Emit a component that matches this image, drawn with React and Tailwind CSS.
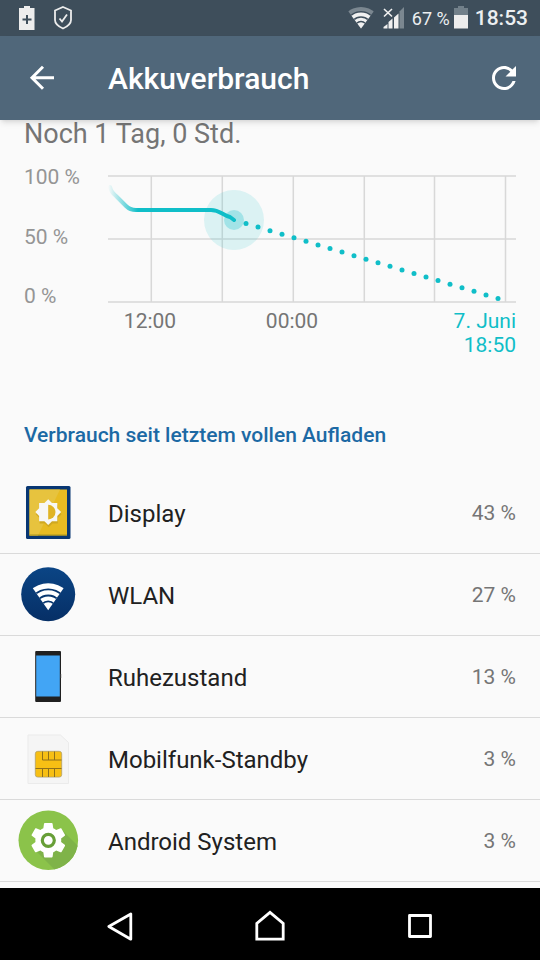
const usage = [
  { name: 'Display', percent: 43, Icon: DisplayIcon },
  { name: 'WLAN', percent: 27, Icon: WlanIcon },
  { name: 'Ruhezustand', percent: 13, Icon: PhoneIcon },
  { name: 'Mobilfunk-Standby', percent: 3, Icon: SimIcon },
  { name: 'Android System', percent: 3, Icon: GearIcon },
];

const projection = Array.from({ length: 22 }, (_, i) => ({
  x: 138 + i * 12,
  y: 48.5 + i * 3.57,
}));

function DisplayIcon() {
  return (
    <svg viewBox="0 1 60 60" className="size-[60px]" aria-hidden="true">
      <rect x="8" y="4" width="44.5" height="53" rx="1.5" fill="#083672" />
      <rect x="11.5" y="7.5" width="37.5" height="46" fill="#e7bb22" />
      <path d="M11.5 7.5H42L20 53.5h-8.5z" fill="#e7c33e" />
      <path d="M11.5 53h37.5" stroke="#a8941f" />
      <path d="M30.2 18.4l3.8 3.8h5.3v5.3l3.8 3.8-3.8 3.8v5.3H34l-3.8 3.8-3.8-3.8h-5.3v-5.3l-3.8-3.8 3.8-3.8v-5.3h5.3z" transform="translate(0.5 1)" fill="#d0a820" />
      <path d="M30.2 17.2l3.8 3.8h5.3v5.3l3.8 3.8-3.8 3.8v5.3H34l-3.8 3.8-3.8-3.8h-5.3v-5.3l-3.8-3.8 3.8-3.8V21h5.3z" fill="#f7f7f5" />
      <path d="M30.2 22.8a7.3 7.3 0 0 1 0 14.6z" fill="#e0b424" />
    </svg>
  );
}

function WlanIcon() {
  return (
    <svg viewBox="0 1 60 60" className="size-[60px]" aria-hidden="true">
      <defs>
        <linearGradient id="wlan-disc" x1="0" y1="0" x2="0" y2="1">
          <stop offset="0" stopColor="#0b4585" />
          <stop offset="1" stopColor="#062f66" />
        </linearGradient>
        <clipPath id="wlan-fan">
          <path d="M30.2 46.3L8 14.5h44.4z" />
        </clipPath>
      </defs>
      <circle cx="30.2" cy="30.3" r="27" fill="url(#wlan-disc)" />
      <g clipPath="url(#wlan-fan)">
        <circle cx="30.2" cy="46.3" r="26" fill="#05285a" opacity="0.45" />
        <circle cx="30.2" cy="45.3" r="26" fill="#fff" />
        <g fill="none" stroke="#07366f" strokeWidth="1.8">
          <circle cx="30.2" cy="45.3" r="20" />
          <circle cx="30.2" cy="45.3" r="13.8" />
          <circle cx="30.2" cy="45.3" r="8" />
        </g>
      </g>
    </svg>
  );
}

function PhoneIcon() {
  return (
    <svg viewBox="0 -1 60 60" className="size-[60px]" aria-hidden="true">
      <rect x="17.2" y="3" width="25.8" height="51" rx="1" fill="#202020" />
      <rect x="18.2" y="7.5" width="23.6" height="41" fill="#42a5f5" />
      <path d="M43.3 26v4" stroke="#bbb" strokeWidth="0.7" />
    </svg>
  );
}

function SimIcon() {
  return (
    <svg viewBox="0 -1 60 60" className="size-[60px]" aria-hidden="true">
      <path d="M10 5h32.5l8 7.5v41H10z" fill="#f5f5f5" stroke="#ebebeb" />
      <rect x="17.3" y="21.3" width="26.4" height="25.8" rx="2.5" fill="#f7bf14" stroke="#a89a6a" strokeWidth="0.7" />
      <g stroke="#8f701a" strokeWidth="1" fill="none">
        <path d="M24.5 21.5v8.5h19M30.5 21.5V30M36.5 21.5V30" />
        <path d="M17.5 38.5h26M24.5 38.5V47M30.5 38.5V47M36.5 38.5V47" />
      </g>
    </svg>
  );
}

function GearIcon() {
  return (
    <svg viewBox="0 1 60 60" className="size-[60px] overflow-visible" aria-hidden="true">
      <defs>
        <clipPath id="gear-disc">
          <circle cx="30.3" cy="30.3" r="29.8" />
        </clipPath>
      </defs>
      <circle cx="30.3" cy="30.3" r="29.8" fill="#8bc34a" />
      <path d="M45 21l20 20v20H38L19 42z" fill="#7fb349" clipPath="url(#gear-disc)" />
      <path
        transform="translate(9.6 9.6) scale(1.725)"
        d="M19.43 12.98c.04-.32.07-.64.07-.98s-.03-.66-.07-.98l2.11-1.65c.19-.15.24-.42.12-.64l-2-3.46c-.12-.22-.39-.3-.61-.22l-2.49 1c-.52-.4-1.08-.73-1.69-.98l-.38-2.65C14.46 2.18 14.25 2 14 2h-4c-.25 0-.46.18-.49.42l-.38 2.65c-.61.25-1.17.59-1.69.98l-2.49-1c-.23-.09-.49 0-.61.22l-2 3.46c-.13.22-.07.49.12.64l2.11 1.65c-.04.32-.07.65-.07.98s.03.66.07.98l-2.11 1.65c-.19.15-.24.42-.12.64l2 3.46c.12.22.39.3.61.22l2.49-1c.52.4 1.08.73 1.69.98l.38 2.65c.03.24.24.42.49.42h4c.25 0 .46-.18.49-.42l.38-2.65c.61-.25 1.17-.59 1.69-.98l2.49 1c.23.09.49 0 .61-.22l2-3.46c.12-.22.07-.49-.12-.64l-2.11-1.65z"
        fill="#fff"
      />
      <circle cx="30.3" cy="30.3" r="6" fill="#fff" stroke="#689f38" strokeWidth="3.2" />
    </svg>
  );
}

function StatusBar() {
  return (
    <div className="flex h-9 items-center bg-[#3e4e5b] px-3 text-[#eceff1]">
      <svg viewBox="0 0 64 36" className="h-9 w-16" aria-hidden="true">
        <path d="M7 8h5V6h6v2h4.5v22H7z" fill="#ededed" />
        <path d="M15 15v9M10.5 19.5h9" stroke="#3e4e5b" strokeWidth="2" />
        <path d="M51 7l8 3.5V20c0 3.5-3.5 6.5-8 8.5-4.5-2-8-5-8-8.5v-9.5z" fill="none" stroke="#ededed" strokeWidth="1.8" />
        <path d="M47.5 18.5l2.5 3 5-7" fill="none" stroke="#ededed" strokeWidth="1.8" />
      </svg>
      <svg viewBox="0 0 60 36" className="ml-auto h-9 w-[60px]" aria-hidden="true">
        <defs>
          <clipPath id="status-fan">
            <path d="M13 28.5L-4.5 5h35z" />
          </clipPath>
        </defs>
        <g clipPath="url(#status-fan)">
          <circle cx="13" cy="27.5" r="20.5" fill="#7b8790" />
          <circle cx="13" cy="27.5" r="16" fill="#f0f0f0" />
          <g fill="none" stroke="#3e4e5b" strokeWidth="1.4">
            <circle cx="13" cy="27.5" r="15.7" />
            <circle cx="13" cy="27.5" r="10.5" />
            <circle cx="13" cy="27.5" r="6" />
          </g>
        </g>
        <path d="M36 9l8 7.500M44 9l-8 7.500" stroke="#f0f0f0" strokeWidth="1.6" />
        <path d="M35.5 28.5v-1.500l4-3v4.500z" fill="#f0f0f0" />
        <path d="M40.5 28.5V22l4-3.500v10z" fill="#f0f0f0" />
        <path d="M46 28.5v-11l4.500-4v15z" fill="#f0f0f0" />
        <path d="M51.500 28.500V11.500L56 7v21.500z" fill="#7b8790" />
      </svg>
      <span className="ml-1 pt-[2px] text-lg">67 %</span>
      <svg viewBox="0 0 16 36" className="ml-[3px] h-9 w-4" aria-hidden="true">
        <path d="M1 8h4V6h6v2h4v7H1z" fill="#72808a" />
        <path d="M1 15h14v13.5H1z" fill="#ededed" />
      </svg>
      <span className="ml-[6px] pt-[2px] text-[21px] font-medium">18:53</span>
    </div>
  );
}

function AppBar() {
  return (
    <header className="relative z-10 flex h-[84px] items-center bg-[#50677a] px-6 text-white shadow-md">
      <button type="button" aria-label="Zurück" className="flex size-9 items-center justify-center">
        <svg viewBox="0 0 36 36" className="size-9" fill="none" stroke="currentColor" strokeWidth="3" aria-hidden="true">
          <path d="M30 17.8H8.5M19 6.800L8 17.800l11 11" />
        </svg>
      </button>
      <h1 className="ml-12 text-[30px] font-medium">Akkuverbrauch</h1>
      <button type="button" aria-label="Aktualisieren" className="-mr-[6px] ml-auto flex size-9 items-center justify-center">
        <svg viewBox="0 0 24 24" className="size-9" fill="currentColor" aria-hidden="true">
          <path d="M17.65 6.35C16.2 4.9 14.21 4 12 4c-4.420 0-7.990 3.580-7.990 8s3.570 8 7.990 8c3.730 0 6.840-2.550 7.730-6h-2.080c-.82 2.330-3.040 4-5.650 4-3.310 0-6-2.690-6-6s2.690-6 6-6c1.660 0 3.140.69 4.220 1.780L13 11h7V4l-2.350 2.350z" />
        </svg>
      </button>
    </header>
  );
}

function BatteryChart() {
  return (
    <figure className="px-6">
      <div className="flex text-[21px] leading-6">
        <div className="flex min-h-[143px] w-[84px] flex-col justify-between text-[#959595]">
          <span>100 %</span>
          <span>50 %</span>
          <span>0 %</span>
        </div>
        <svg viewBox="0 0 408 128" className="mt-[10px] min-w-0 flex-1 self-start" role="img" aria-label="Akkustand im Zeitverlauf">
          <defs>
            <linearGradient id="history" gradientUnits="userSpaceOnUse" x1="0" y1="0" x2="30" y2="0">
              <stop offset="0" stopColor="#10bec8" stopOpacity="0" />
              <stop offset="1" stopColor="#10bec8" />
            </linearGradient>
          </defs>
          <path d="M0 1h408M0 64h408M0 127h408M43.3 1v126M114.3 1v126M185.3 1v126M256.3 1v126M326.5 1v126M397.5 1v126" stroke="#d8d8d8" strokeWidth="1.5" fill="none" />
          <circle cx="126" cy="45" r="30" fill="#10bec8" fillOpacity="0.13" />
          <circle cx="126" cy="45" r="10" fill="#10bec8" fillOpacity="0.28" />
          <path d="M2 12Q3 17 8 21L18 31Q22 35 28 35H103C112 35 114 40 122 42L126 45" fill="none" stroke="url(#history)" strokeWidth="4" strokeLinecap="round" strokeLinejoin="round" />
          {projection.map((p) => (
            <circle key={p.x} cx={p.x} cy={p.y} r="2.5" fill="#10bec8" />
          ))}
        </svg>
      </div>
      <figcaption className="mt-px flex pl-[84px] text-[21px] leading-6 text-[#757575]">
        <span className="w-[84px] text-center">12:00</span>
        <span className="ml-[58px] w-[84px] text-center">00:00</span>
        <span className="ml-auto text-right text-[#10bec8]">
          7. Juni
          <br />
          18:50
        </span>
      </figcaption>
    </figure>
  );
}

function NavBar() {
  return (
    <nav className="mt-auto flex h-[72px] items-center justify-center gap-[90px] bg-black pt-1 text-white">
      <button type="button" aria-label="Zurück" className="size-[60px]">
        <svg viewBox="0 0 60 60" className="size-[60px]" fill="none" stroke="currentColor" strokeWidth="2.8" strokeLinejoin="round" aria-hidden="true">
          <path d="M40.8 18v25.200L18.800 30.500z" />
        </svg>
      </button>
      <button type="button" aria-label="Startseite" className="size-[60px]">
        <svg viewBox="0 0 60 60" className="size-[60px]" fill="none" stroke="currentColor" strokeWidth="2.8" aria-hidden="true">
          <path d="M16.8 43.200V27.300L30 16.300l13.200 11v15.900z" />
        </svg>
      </button>
      <button type="button" aria-label="Übersicht" className="size-[60px]">
        <svg viewBox="0 0 60 60" className="size-[60px]" fill="none" stroke="currentColor" strokeWidth="2.8" strokeLinejoin="round" aria-hidden="true">
          <path d="M19.5 19.500h21v21h-21z" />
        </svg>
      </button>
    </nav>
  );
}

export default function App() {
  return (
    <div className="flex min-h-screen flex-col bg-[#fafafa] font-['Roboto','Noto_Sans',sans-serif]">
      <StatusBar />
      <AppBar />
      <main className="pb-[6px]">
        <p className="px-6 pb-4 text-[27px] leading-[29px] text-[#757575]">Noch 1 Tag, 0 Std.</p>
        <BatteryChart />
        <h2 className="mt-15 px-6 text-[21px] leading-9 font-medium text-[#1c69a4]">Verbrauch seit letztem vollen Aufladen</h2>
        <ul className="mt-[19px]">
          {usage.map(({ name, percent, Icon }) => (
            <li key={name} className="border-b border-[#dadada]">
              <button type="button" className="flex h-[81px] w-full items-center pr-6 pl-[18px] text-left">
                <Icon />
                <span className="ml-[30px] flex-1 pt-[2px] text-2xl text-[#212121]">{name}</span>
                <span className="pt-[2px] text-[21px] text-[#757575]">{percent} %</span>
              </button>
            </li>
          ))}
        </ul>
      </main>
      <NavBar />
    </div>
  );
}
